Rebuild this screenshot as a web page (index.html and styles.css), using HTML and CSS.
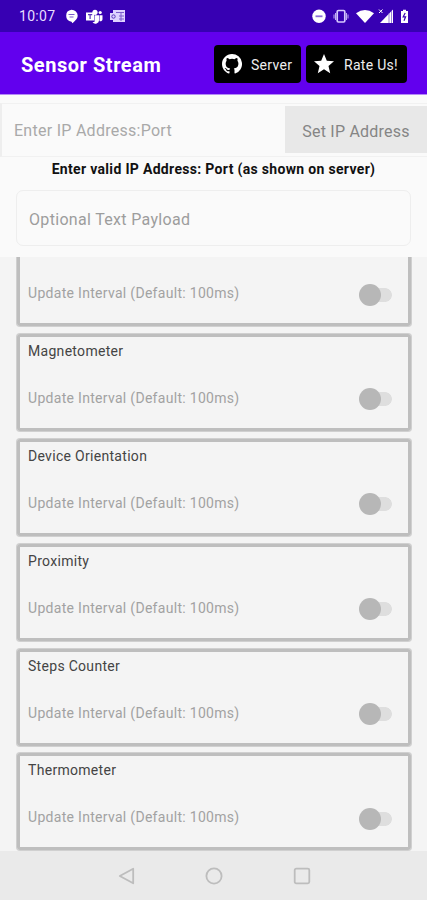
FILE: index.html
```html
<!DOCTYPE html>
<html lang="en">
<head>
<meta charset="utf-8">
<title>Sensor Stream</title>
<link rel="stylesheet" href="styles.css">
</head>
<body>
<div class="status">
  <span class="clock">10:07</span>
  <svg class="status-left" width="62" height="16" viewBox="0 0 62 16" fill="#fff">
    <path d="M6.500 1.800a6.200 6 0 0 1 6.200 6c0 3-2.300 4.800-5.200 7.400l-1-1.500A6.100 6 0 0 1 6.500 1.800z"/>
    <path d="M3.500 6.500h6M4.500 9h4" stroke="#7a5bcd" stroke-width="1.200"/>
    <circle cx="30" cy="4.300" r="2.600"/><circle cx="35.200" cy="4.500" r="1.600"/>
    <path d="M21 4.500h8v8h-8zM29.500 7.200h4.500v4.500a3.500 3.500 0 0 1-6.500 2.200h2zM34.500 7.200h3v4a2 2 0 0 1-3 1.700z"/>
    <path d="M23 6.700h4.200M25.100 6.700v4.200" stroke="#5a35bd" stroke-width="1.200"/>
    <path d="M48 2h12v12H48zM45 5h7v7h-7z" fill="#ded2ff"/>
    <path d="M51 4.500h8M54 8h5M56 5v8M54 11h5" stroke="#7a5bcd"/>
    <circle cx="48.500" cy="8.500" r="1.700" fill="none" stroke="#5a35bd"/>
  </svg>
  <svg class="status-right" width="98" height="16" viewBox="0 0 98 16" fill="#fff">
    <circle cx="7" cy="8.300" r="6.700"/><path d="M3.500 8.300h7" stroke="#8a6cd8" stroke-width="1.800"/>
    <rect x="25.200" y="2.500" width="7.600" height="11.500" rx="1.200" fill="none" stroke="#d6c8ff" stroke-width="1.700"/>
    <path d="M23.500 5v7M34.500 5v7M22 6.500v4M36 6.500v4" stroke="#c0abf2"/>
    <path d="M44 5.300q9-6.600 18 0L53 15z"/>
    <path d="M81 1.500V15H68z"/><path d="M77 5v10M79.500 3v12" stroke="#8061d0" stroke-width=".8"/>
    <path d="m67 1.500 3.500 3.500m0-3.500L67 5" stroke="#fff"/>
    <path d="M89 3h2V1.800h3V3h2v12h-7z"/><path d="m93.200 5-2 3.800h2.400l-1.600 4" fill="none" stroke="#3700b3" stroke-width="1.200"/>
  </svg>
</div>
<header class="appbar">
  <h1>Sensor Stream</h1>
  <div class="action server">
    <svg width="20" height="20" viewBox="0 0 16 16" fill="#fff"><path d="M8 0C3.580 0 0 3.580 0 8c0 3.540 2.290 6.530 5.470 7.590.4.070.55-.17.55-.38 0-.19-.01-.82-.01-1.490-2.010.37-2.530-.49-2.690-.94-.09-.23-.48-.94-.82-1.130-.28-.15-.68-.52-.01-.53.63-.01 1.080.58 1.230.82.72 1.210 1.870.87 2.330.66.07-.52.28-.87.51-1.070-1.780-.2-3.640-.89-3.640-3.950 0-.87.31-1.590.82-2.150-.08-.2-.36-1.020.08-2.120 0 0 .67-.21 2.200.82a7.600 7.600 0 0 1 4 0c1.530-1.040 2.200-.82 2.200-.82.44 1.100.16 1.920.08 2.120.51.56.82 1.270.82 2.150 0 3.070-1.870 3.750-3.650 3.950.29.25.54.73.54 1.480 0 1.070-.01 1.930-.01 2.200 0 .21.15.46.55.38A8 8 0 0 0 8 0z"/></svg>
    <span>Server</span>
  </div>
  <div class="action rate">
    <svg width="20" height="20" viewBox="0 0 20 20" fill="#fff"><path d="m10 0 2.800 6.800 7.200.5-5.500 4.700 1.700 7.200L10 15.300l-6.200 3.900L5.500 12 0 7.300l7.200-.5z"/></svg>
    <span>Rate Us!</span>
  </div>
</header>
<section class="form">
  <div class="address">
    <div class="ip">Enter IP Address:Port</div>
    <div class="set">Set IP Address</div>
  </div>
  <p class="message">Enter valid IP Address: Port (as shown on server)</p>
  <div class="payload">Optional Text Payload</div>
</section>
<main class="sensors">
  <article class="card"><h2></h2><div class="row"><span>Update Interval (Default: 100ms)</span><i class="toggle"></i></div></article>
  <article class="card"><h2>Magnetometer</h2><div class="row"><span>Update Interval (Default: 100ms)</span><i class="toggle"></i></div></article>
  <article class="card"><h2>Device Orientation</h2><div class="row"><span>Update Interval (Default: 100ms)</span><i class="toggle"></i></div></article>
  <article class="card"><h2>Proximity</h2><div class="row"><span>Update Interval (Default: 100ms)</span><i class="toggle"></i></div></article>
  <article class="card"><h2>Steps Counter</h2><div class="row"><span>Update Interval (Default: 100ms)</span><i class="toggle"></i></div></article>
  <article class="card"><h2>Thermometer</h2><div class="row"><span>Update Interval (Default: 100ms)</span><i class="toggle"></i></div></article>
</main>
<nav class="nav">
  <svg width="18" height="18" viewBox="0 0 18 18"><path d="M16.200 1.700v14.600L2.800 9z"/></svg>
  <svg width="18" height="18" viewBox="0 0 18 18"><circle cx="9" cy="9" r="7.600"/></svg>
  <svg width="18" height="18" viewBox="0 0 18 18"><rect x="1.700" y="1.700" width="14.600" height="14.600" rx="1.500"/></svg>
</nav>
</body>
</html>
```
FILE: styles.css
```css
* { box-sizing: border-box; }
body {
  margin: 0;
  width: 427px;
  height: 900px;
  overflow: hidden;
  display: flex;
  flex-direction: column;
  background: #fafafa;
  font-family: Roboto, "Liberation Sans", sans-serif;
}
h1, h2, p { margin: 0; }
svg { display: block; flex: none; }
.status {
  height: 32px;
  flex: none;
  display: flex;
  align-items: center;
  padding: 0 17px 0 19px;
  background: #3700b3;
  color: #e8deff;
}
.clock { width: 46px; font-size: 14px; letter-spacing: .3px; }
.status-right { margin-left: auto; }
.appbar {
  height: 63px;
  flex: none;
  display: flex;
  align-items: center;
  gap: 5px;
  padding: 0 20px 0 21px;
  background: #6200ee;
  border-bottom: 1px solid #b48af5;
}
h1 {
  flex: 1;
  color: #fff;
  font-size: 20px;
  font-weight: 700;
  letter-spacing: .54px;
  white-space: nowrap;
  padding-top: 3px;
}
.action {
  height: 38px;
  flex: none;
  display: flex;
  align-items: center;
  border-radius: 4px;
  background: #000;
  color: #eee;
  font-size: 14px;
  letter-spacing: .3px;
  white-space: nowrap;
  padding-left: 8px;
  margin-top: 1px;
}
.action span { padding-top: 2px; }
.server { width: 87px; gap: 9px; }
.rate { width: 101px; gap: 10px; }
.form {
  height: 162px;
  flex: none;
  padding-top: 8px;
}
.address {
  height: 54px;
  display: flex;
  align-items: center;
  border: 1px solid #f1f1f1;
  border-left: 2px solid #eee;
  border-right: 0;
}
.ip {
  flex: 1;
  padding-left: 12px;
  color: #a9a9a9;
  font-size: 16px;
  letter-spacing: .27px;
  padding-top: 1px;
}
.set {
  width: 142px;
  height: 47px;
  margin-top: -1px;
  line-height: 51px;
  text-align: center;
  background: #e8e8e8;
  color: #858585;
  font-size: 16px;
  letter-spacing: .23px;
}
.message {
  height: 33px;
  line-height: 24px;
  text-align: center;
  color: #111;
  font-size: 14px;
  font-weight: 700;
  letter-spacing: .32px;
  white-space: nowrap;
}
.payload {
  height: 56px;
  margin: 0 16px;
  padding-left: 12px;
  line-height: 57px;
  border: 1px solid #eee;
  border-radius: 7px;
  color: #9d9d9d;
  font-size: 16px;
  letter-spacing: .32px;
}
.sensors {
  height: 594px;
  flex: none;
  overflow: hidden;
  padding: 0 16px 0 17px;
  background: #f4f4f4;
}
.card {
  height: 97px;
  margin-bottom: 7.900px;
  border: 3px solid #bebebe;
  border-radius: 3px;
  box-shadow: 0 0 0 1px #d0d0d0;
  padding: 6px 15px 0 8px;
}
.card:first-child { margin-top: -28px; }
h2 {
  height: 34px;
  color: #444;
  font-size: 14px;
  line-height: 17px;
  font-weight: 400;
  letter-spacing: .3px;
}
.row {
  height: 42px;
  display: flex;
  justify-content: space-between;
  align-items: center;
  color: #a2a2a2;
  font-size: 14px;
  letter-spacing: .3px;
}
.toggle {
  width: 34px;
  height: 22px;
  margin-top: 3px;
  display: flex;
  align-items: center;
  background: linear-gradient(#dedede, #dedede) 10px 4px / 15px 14px no-repeat, radial-gradient(circle at 26px 11px, #dedede 6.500px, transparent 7.200px);
}
.toggle::before {
  content: "";
  width: 22px;
  height: 22px;
  border-radius: 50%;
  background: #b7b7b7;
}
.nav {
  height: 49px;
  flex: none;
  display: flex;
  justify-content: center;
  align-items: center;
  gap: 70px;
  background: #eaeaea;
}
.nav svg { fill: none; stroke: #bdbdbd; stroke-width: 1.800; stroke-linejoin: round; }
```
